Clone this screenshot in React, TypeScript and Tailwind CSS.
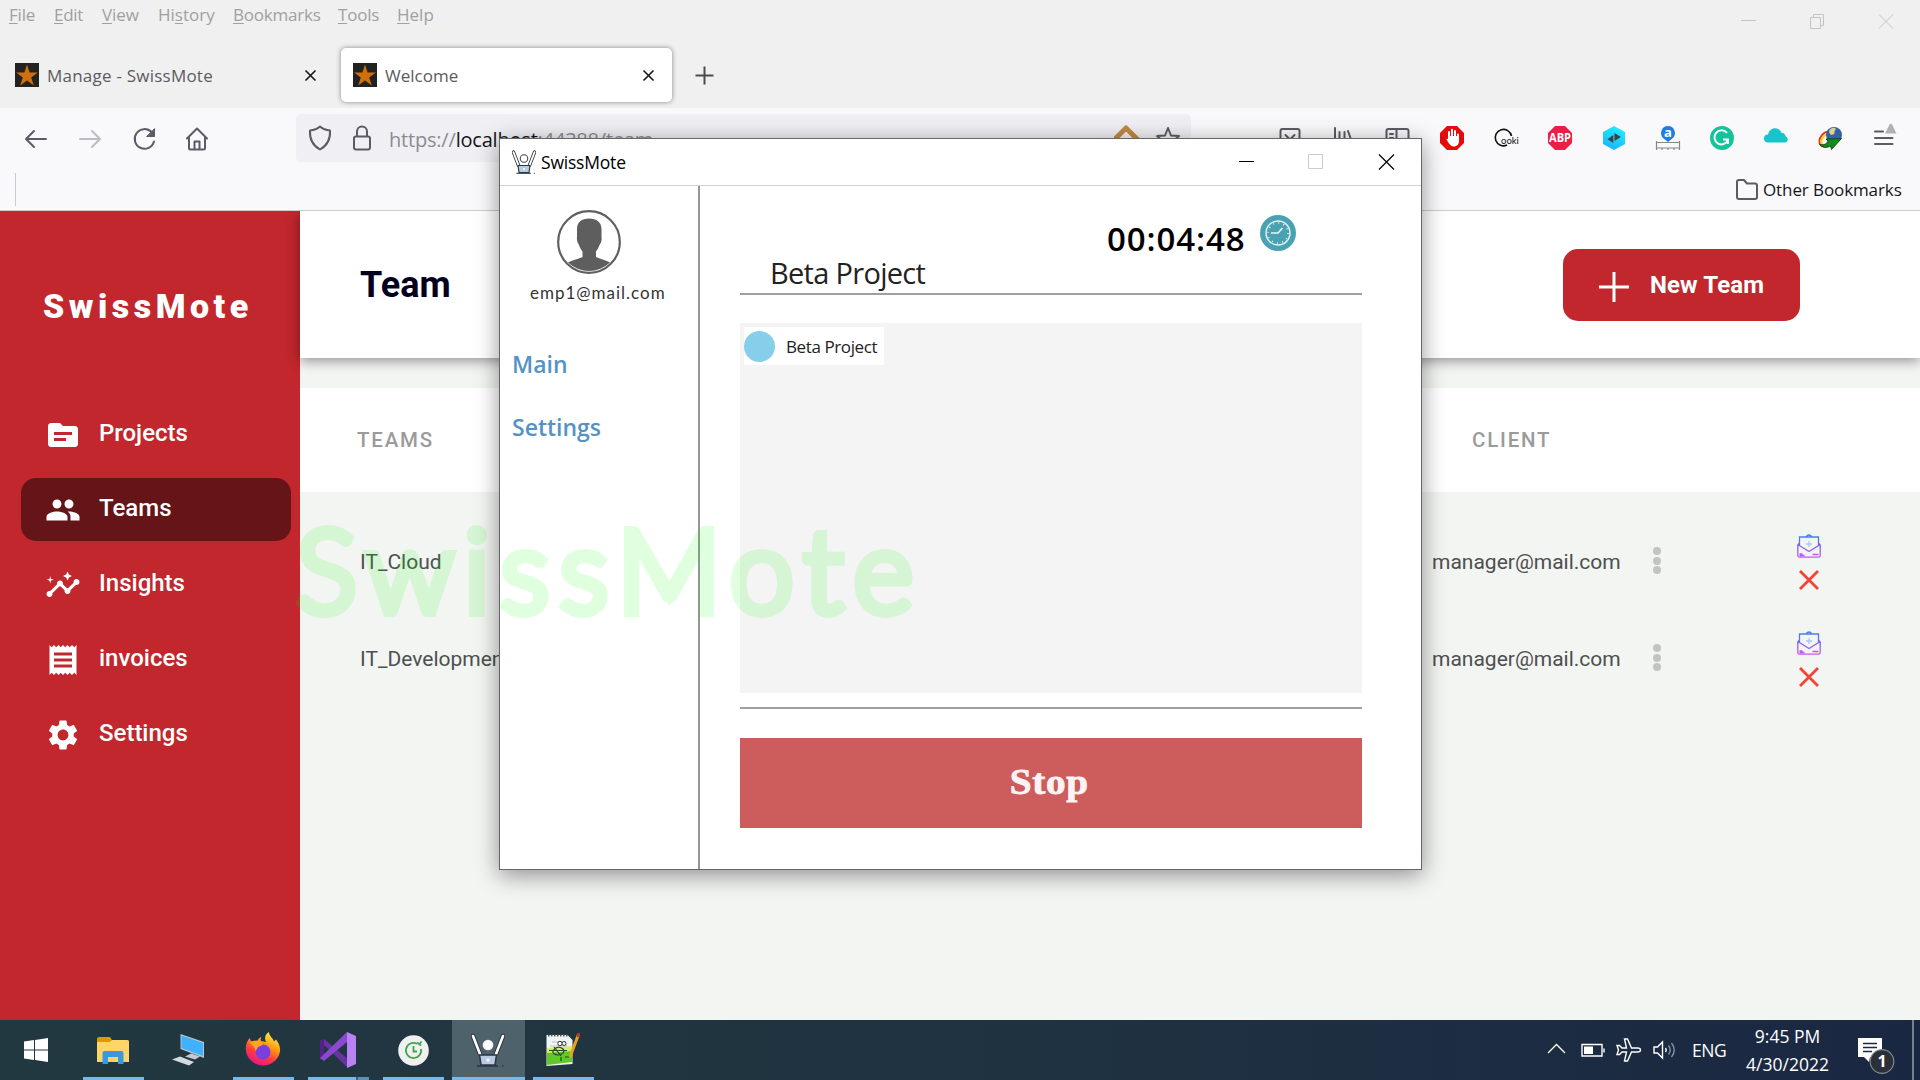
import React from "react";
import { MdSource, MdPeople, MdInsights, MdReceipt, MdSettings } from "react-icons/md";

const UI = "font-['Open_Sans',sans-serif]";

function StarFavicon() {
  return (
    <svg width="24" height="24" viewBox="0 0 24 24" className="shrink-0">
      <rect width="24" height="24" fill="#222" />
      <path d="M12 1.5l2.6 8h8.2l-6.6 4.9 2.6 8L12 17.5l-6.8 4.9 2.6-8L1.2 9.500h8.2z" fill="#d0700c" />
    </svg>
  );
}

function TabClose() {
  return (
    <svg width="13" height="13" viewBox="0 0 13 13" stroke="#15141a" strokeWidth="1.6">
      <path d="M1.500 1.500l10 10M11.500 1.500l-10 10" />
    </svg>
  );
}

function Menu({ k, rest, pre = "", className }: { k: string; rest: string; pre?: string; className: string }) {
  return (
    <span className={"shrink-0 whitespace-nowrap " + className}>
      {pre}
      <span className="underline decoration-1 underline-offset-2">{k}</span>
      {rest}
    </span>
  );
}

function TopStrip() {
  return (
    <div className="flex h-[108px] bg-[#f0f0f0]">
      <div className="flex flex-1 flex-col">
        <div className="flex h-[29px] pl-[9px] text-[17px] leading-[29px] text-[#a0a0a0]">
          <Menu k="F" rest="ile" className="w-[45px] tracking-[-0.2px]" />
          <Menu k="E" rest="dit" className="w-[48px] tracking-[-0.3px]" />
          <Menu k="V" rest="iew" className="w-[56px] tracking-[-0.1px]" />
          <Menu pre="Hi" k="s" rest="tory" className="w-[75px]" />
          <Menu k="B" rest="ookmarks" className="w-[105px] tracking-[-0.2px]" />
          <Menu k="T" rest="ools" className="w-[59px] tracking-[-0.2px]" />
          <Menu k="H" rest="elp" className="w-[50px]" />
        </div>
        <div className="flex h-[79px] items-start pt-[19px] text-[17px] text-[#5b5b60]">
          <div className="flex h-[54px] w-[341px] items-center pl-[15px]">
            <StarFavicon />
            <span className="ml-2 w-[257px] whitespace-nowrap pt-px tracking-[0.23px]">Manage - SwissMote</span>
            <TabClose />
          </div>
          <div className="flex h-[54px] w-[331px] items-center rounded-[5px] bg-white pl-3 shadow-[0_0_5px_rgba(0,0,0,0.45)]">
            <StarFavicon />
            <span className="ml-2 w-[257px] pt-px">Welcome</span>
            <TabClose />
          </div>
          <svg className="ml-[23px] mt-[18px]" width="19" height="19" viewBox="0 0 19 19" stroke="#4a4a50" strokeWidth="2">
            <path d="M9.500 0.500v18M0.500 9.500h18" />
          </svg>
        </div>
      </div>
      <div className="flex items-start pr-[26px] pt-[14px]">
        <svg width="153" height="15" viewBox="0 0 153 15" fill="none" stroke="#c4c4c4" strokeWidth="1">
          <path d="M0 6.500h15M69.500 3.500h10v11h-10zM72.500 3.500v-3h10v11h-3M138 0.500l14 14M152 0.500l-14 14" />
        </svg>
      </div>
    </div>
  );
}

function Extensions() {
  return (
    <div className="flex w-[486px] items-center">
      <div className="flex w-[54px] justify-center">
        <svg width="24" height="24" viewBox="0 0 24 24">
          <path d="M7 0h10l7 7v10l-7 7H7l-7-7V7z" fill="#e30b0b" />
          <path d="M9 13V6M12 12V3.800M15 12V5M18 14V8.500" stroke="#fff" strokeWidth="2" strokeLinecap="round" />
          <path d="M8 10h11v5c0 3-2 5.500-5 5.500-2.500 0-4-1.500-5-3l-2.500-4c0-1 1-1 1.500-.5z" fill="#fff" />
        </svg>
      </div>
      <div className="flex w-[54px] justify-center">
        <svg width="24" height="24" viewBox="0 0 24 24" fill="none" className="overflow-visible">
          <path d="M13 19A8.200 8.200 0 1 1 17.500 10" stroke="#111" strokeWidth="1.600" />
          <text x="7" y="18" fontSize="9.500" fontFamily="Lato" fill="#111">ooki</text>
        </svg>
      </div>
      <div className="flex w-[54px] justify-center">
        <svg width="24" height="24" viewBox="0 0 24 24">
          <path d="M7 0h10l7 7v10l-7 7H7l-7-7V7z" fill="#ed1e45" />
          <text x="12" y="16.300" fontSize="11.500" fontWeight="700" fontFamily="Open Sans" textAnchor="middle" textLength="22" lengthAdjust="spacingAndGlyphs" fill="#fff">ABP</text>
        </svg>
      </div>
      <div className="flex w-[54px] justify-center">
        <svg width="24" height="24" viewBox="0 0 24 24">
          <defs>
            <linearGradient id="hex" x1="0.700" y1="0" x2="0.300" y2="1">
              <stop offset="0" stopColor="#1ff0ff" />
              <stop offset="1" stopColor="#17b4ff" />
            </linearGradient>
          </defs>
          <path d="M12 0l11 6v12l-11 6-11-6V6z" fill="url(#hex)" />
          <path d="M11.300 9v8L5.500 13.300zM12.500 7v8l6.300-4z" fill="#3c4144" />
        </svg>
      </div>
      <div className="flex w-[54px] justify-center">
        <svg width="24" height="24" viewBox="0 0 24 24" className="overflow-visible">
          <path d="M12 0a7 7 0 0 1 4 12.700L12 16l-4-3.300A7 7 0 0 1 12 0z" fill="#1c7fe8" />
          <text x="12" y="11" fontSize="13" fontWeight="700" fontFamily="Noto Sans" textAnchor="middle" fill="#fff">a</text>
          <path d="M.5 15v9M23.500 15v9M.5 16.500h23M.5 22h23M6 22v2M12 22v2M18 22v2" stroke="#888" strokeWidth="1.200" fill="none" />
        </svg>
      </div>
      <div className="flex w-[54px] justify-center">
        <svg width="24" height="24" viewBox="0 0 24 24" fill="none" stroke="#fff" strokeWidth="2">
          <circle cx="12" cy="12" r="12" fill="#15c39a" stroke="none" />
          <path d="M17 7A7 7 0 1 0 18 14M13 13.500h5v4.500" />
        </svg>
      </div>
      <div className="flex w-[54px] justify-center">
        <svg width="24" height="24" viewBox="0 0 24 24">
          <path d="M4 16.500a4 4 0 0 1 0-8C5 4.500 7.500 2.200 11 2.200c3.200 0 5.500 2 6.300 4.600 2.500 0 4.200 1.600 4.300 3.700 3.200 1 2.700 6-.6 6z" fill="#17c4cb" />
        </svg>
      </div>
      <div className="flex w-[54px] justify-center">
        <svg width="24" height="24" viewBox="0 0 24 24" fill="none">
          <ellipse cx="8.500" cy="13" rx="8.500" ry="6" stroke="#e33320" strokeWidth="1.800" transform="rotate(-50 8.500 13)" />
          <ellipse cx="9" cy="13.500" rx="7" ry="4.500" stroke="#f5d51c" strokeWidth="2" transform="rotate(-50 9 13.500)" />
          <circle cx="16" cy="9" r="8" fill="#3560a8" />
          <path d="M11.500 4c2-2.500 5-3 6-1.500s-2 2.500-1 4-3 3-4 2-2-3-1-4.500z" fill="#d8d38d" />
          <path d="M1.500 18c3 2 7.500 0 8.500-3l-2-2 15.500-.5L13.500 23.500l-1-3.500C8.500 22.500 4 21.500 1.500 18z" fill="#128a1c" stroke="#0a3c0d" strokeWidth="0.800" />
        </svg>
      </div>
      <div className="flex w-[54px] justify-center">
        <svg width="26" height="30" viewBox="0 0 26 30" className="mb-[2px]">
          <path d="M4 9.500h8M4 16h17.500M4 22h17.500" stroke="#5b5b66" strokeWidth="2" strokeLinecap="round" />
          <path d="M14 11.500L18.500 2.500q1.300-1.600 2.600 0L25.500 11.500z" fill="#b1b1b3" />
        </svg>
      </div>
    </div>
  );
}

function NavBar() {
  return (
    <div className="flex h-[60px] items-center bg-[#f9f9fb]">
      <svg className="ml-6 shrink-0" width="190" height="28" viewBox="0 0 190 28" fill="none" stroke="#5b5b66" strokeWidth="2" strokeLinecap="round" strokeLinejoin="round">
        <path d="M22 15H2M10 7l-8 8 8 8" />
        <path d="M56 15h20M68 7l8 8-8 8" stroke="#bcbcc2" />
        <path d="M130 17.500a9.800 9.800 0 1 1-2.500-9.500" />
        <path d="M130.500 5v7.500h-7.500z" fill="#5b5b66" strokeWidth="1" />
        <path d="M163 14.500L173 4.500l10 10M165 13v11q0 1.500 1.500 1.500h13q1.500 0 1.500-1.500V13M170.500 25v-7.500h5V25" />
      </svg>
      <div className="ml-[82px] flex h-12 w-[895px] shrink-0 items-center rounded-[5px] bg-[#f0f0f4]">
        <svg className="ml-3 shrink-0" width="64" height="26" viewBox="0 0 64 26" fill="none" stroke="#5b5b66" strokeWidth="2" strokeLinejoin="round">
          <path d="M12 1.500q4 3.500 10 4 .8 13-10 19Q1.200 18.500 2 5.500q6-.5 10-4z" />
          <rect x="46" y="11.500" width="16" height="13" rx="2" />
          <path d="M49 11.500V6.500a5 5 0 0 1 10 0v5" />
        </svg>
        <span className="ml-[17px] mt-[3px] w-[725px] whitespace-nowrap text-[20px] leading-6 tracking-[-0.2px] text-[#8b8b93]">
          https://<span className="text-[#15141a]">localhost</span>:44388/team
        </span>
        <svg className="shrink-0" width="70" height="26" viewBox="0 0 70 26" fill="none" strokeLinejoin="round">
          <path d="M0 15L12 3l12 12" stroke="#c08a42" strokeWidth="5" />
          <path d="M54 3l3 7.500 8 .6-6 5.200 2 8L54 20l-7 4.300 2-8-6-5.200 8-.6z" stroke="#5b5b66" strokeWidth="2" />
        </svg>
      </div>
      <svg className="ml-[87px] shrink-0" width="134" height="26" viewBox="0 0 134 26" fill="none" stroke="#5b5b66" strokeWidth="2" strokeLinecap="round">
        <path d="M2.500 6q0-2 2-2h15q2 0 2 2v7a9.500 9 0 0 1-19 0zM7.500 10l4.500 4.500 4.500-4.500" />
        <path d="M57 3v18M61.500 7v14M66.500 7v14M70 6l5 14" />
        <path d="M108.500 6q0-2 2-2h18q2 0 2 2v14h-22zM118.500 4v16M112 9h3M112 13h3" />
      </svg>
      <div className="ml-[13px]">
        <Extensions />
      </div>
    </div>
  );
}

function BookmarksBar() {
  return (
    <div className="flex h-[43px] items-center justify-between border-b border-[#cccccc] bg-[#f9f9fb]">
      <div className="ml-[15px] h-[33px] w-px bg-[#ccccd0]" />
      <div className="flex items-center">
        <svg width="22" height="21" viewBox="0 0 22 21" fill="none" stroke="#5b5b66" strokeWidth="2" strokeLinejoin="round">
          <path d="M1 18V3q0-2 2-2h5l3 3.500h8q2 0 2 2V18q0 2-2 2H3q-2 0-2-2z" />
        </svg>
        <span className="ml-[5px] w-[157px] whitespace-nowrap pt-px text-[17px] tracking-[-0.1px] text-[#15141a]">Other Bookmarks</span>
      </div>
    </div>
  );
}

const NAV = [
  { label: "Projects", Icon: MdSource, active: false },
  { label: "Teams", Icon: MdPeople, active: true },
  { label: "Insights", Icon: MdInsights, active: false },
  { label: "invoices", Icon: MdReceipt, active: false },
  { label: "Settings", Icon: MdSettings, active: false },
];

function Sidebar() {
  return (
    <aside className="w-[300px] shrink-0 bg-[#c1272d] text-white">
      <div className="flex h-[192px] items-center pb-[2px] pl-[43px] text-[34px] font-black leading-none tracking-[4.5px]">SwissMote</div>
      <nav className="flex flex-col gap-3 pl-[21px] pr-[9px]">
        {NAV.map(({ label, Icon, active }) => (
          <div key={label} className={"flex h-[63px] items-center rounded-[15px] pl-6 " + (active ? "bg-[#651418]" : "")}>
            <Icon size={36} />
            <span className="mb-[3px] ml-[18px] text-[24px] font-medium leading-none">{label}</span>
          </div>
        ))}
      </nav>
    </aside>
  );
}

function Envelope() {
  return (
    <svg width="24" height="24" viewBox="0 0 24 24" fill="none">
      <defs>
        <linearGradient id="env" x1="0" y1="0" x2="0" y2="24" gradientUnits="userSpaceOnUse">
          <stop offset="0" stopColor="#3f83f0" />
          <stop offset="0.500" stopColor="#7a62f4" />
          <stop offset="1" stopColor="#cf55f7" />
        </linearGradient>
      </defs>
      <path d="M2.500 11V3h19v8M9 3q3-4 6 0M2.500 9L.8 11v10.500q0 1.700 1.700 1.700h19q1.700 0 1.700-1.700V11L21.500 9M1.500 11L12 17.500 22.500 11M2.500 20h3M2.500 21.500h5M15.500 20.500h6" stroke="url(#env)" strokeWidth="1.300" />
      <path d="M12 7v6M9 10h6" stroke="#aac6f7" strokeWidth="1.300" />
    </svg>
  );
}

function Row({ team }: { team: string }) {
  return (
    <div className="flex h-[97px] items-center text-[#4d4f50]">
      <span className="ml-[60px] w-[1072px] pt-[3px] text-[21px] leading-none">{team}</span>
      <span className="w-[221px] pt-[3px] text-[21px] leading-none">manager@mail.com</span>
      <span className="flex w-2 flex-col gap-[1.400px]">
        <i className="size-2 rounded-full bg-[#c3c3c3]" />
        <i className="size-2 rounded-full bg-[#c3c3c3]" />
        <i className="size-2 rounded-full bg-[#c3c3c3]" />
      </span>
      <span className="ml-[136px] flex flex-col items-center gap-3 pt-[2px]">
        <Envelope />
        <svg width="20" height="20" viewBox="0 0 20 20" stroke="#f44336" strokeWidth="2.800">
          <path d="M1 1l18 18M19 1L1 19" />
        </svg>
      </span>
    </div>
  );
}

function Page() {
  return (
    <div className="flex h-[809px] overflow-hidden font-[Roboto,sans-serif]">
      <Sidebar />
      <main className="flex-1 bg-[#f3f5f2]">
        <header className="relative flex h-[147px] items-center bg-white shadow-[0_3px_12px_rgba(0,0,0,0.4)]">
          <h1 className="ml-[60px] w-[1203px] text-[36px] font-bold leading-none text-[#02001c]">Team</h1>
          <button className="flex h-[72px] w-[237px] items-center rounded-[15px] bg-[#c1272d] text-white">
            <svg className="ml-9 mt-1" width="30" height="30" viewBox="0 0 30 30" stroke="#fff" strokeWidth="3">
              <path d="M15 0v30M0 15h30" />
            </svg>
            <span className="ml-[21px] text-[24px] font-bold leading-none tracking-[0.1px]">New Team</span>
          </button>
        </header>
        <div className="mt-[30px] flex h-[104px] items-center bg-white text-[20.500px] font-medium leading-none tracking-[1.800px] text-[#9b9b9b]">
          <span className="ml-[57px] w-[1115px]">TEAMS</span>
          <span>CLIENT</span>
        </div>
        <div className="pt-[20px]">
          <Row team="IT_Cloud" />
          <Row team="IT_Development" />
        </div>
      </main>
    </div>
  );
}

function PersonIcon({ size, solid = false }: { size: number; solid?: boolean }) {
  return (
    <svg width={size} height={size} viewBox="0 0 34 34" fill="none" className="shrink-0">
      <path d="M2 3l7 18M32 3l-7 18" stroke="#2e3640" strokeWidth={solid ? 4.6 : 5} strokeLinecap="round" />
      <path d="M2 3l7 18M32 3l-7 18" stroke="#fff" strokeWidth="2.600" strokeLinecap="round" />
      <circle cx="17" cy="12" r={solid ? 4.6 : 5.3} fill="#fff" stroke={solid ? "#f4f4f4" : "#3e4650"} strokeWidth="1.500" />
      <path d="M8.500 22h17l-1.500 10H10z" fill="#b9cbe4" stroke="#2e3640" strokeWidth="1.600" />
      <circle cx="17" cy="27" r="1.500" fill="#fff" />
      <path d="M6 33h21M31 33h1.500" stroke="#2e3640" strokeWidth="1.400" />
    </svg>
  );
}

function Dialog() {
  return (
    <div className={"absolute left-[499px] top-[138px] flex h-[732px] w-[923px] flex-col border border-[#666] bg-white shadow-[0_5px_22px_rgba(0,0,0,0.42)] " + UI}>
      <div className="flex h-[47px] shrink-0 items-center border-b border-[#d0d0d0] pl-3">
        <PersonIcon size={24} />
        <span className="ml-[5px] w-[698px] pt-px text-[17.500px] leading-none tracking-[-0.2px] text-black">SwissMote</span>
        <svg width="160" height="16" viewBox="0 0 160 16" fill="none">
          <path d="M0 7.500h15" stroke="#000" />
          <path d="M69.500 0.500h14v14h-14z" stroke="#ccc" />
          <path d="M140 0.500l15 15M155 0.500l-15 15" stroke="#000" strokeWidth="1.200" />
        </svg>
      </div>
      <div className="flex flex-1">
        <div className="w-[200px] shrink-0 border-r-2 border-[#959595] pt-6">
          <svg className="ml-[57px]" width="64" height="64" viewBox="0 0 64 64">
            <circle cx="32" cy="32" r="30.800" fill="#fff" stroke="#606060" strokeWidth="2.200" />
            <path d="M32 8.500c7.500 0 12.500 4 12.500 10.500v8c.6 3-.5 6-2 8-1.200 3.500-2.500 5-3.500 6.500v5.500c5 2.500 10 3 14 5.500A30.500 30.500 0 0 1 11 52.500c4-2.500 9.500-3 14.500-5.500v-5.500c-1-1.500-2.500-3-3.500-6.500-1.500-2-2.500-5-2-8v-8c0-6.500 4.500-10.500 12-10.500z" fill="#5e5e5e" />
          </svg>
          <div className="ml-[30px] mt-[7px] font-[Lato,sans-serif] text-[17px] leading-6 tracking-[1px] text-[#333]">emp1@mail.com</div>
          <div className="ml-[12px] mt-[43px] text-[23px] font-semibold leading-8 text-[#5592c6]">Main</div>
          <div className="ml-[12px] mt-[31px] text-[23px] font-semibold leading-8 text-[#5592c6]">Settings</div>
        </div>
        <div className="ml-10 w-[622px]">
          <div className="flex h-[107px] items-start">
            <span className="ml-[30px] mt-[67px] w-[337px] text-[29px] leading-10 tracking-[-0.700px] text-[#222]">Beta Project</span>
            <span className="mt-[33px] w-[153px] whitespace-nowrap text-[33px] font-semibold leading-10 tracking-[0.900px] text-black">00:04:48</span>
            <svg className="mt-[29px]" width="36" height="36" viewBox="0 0 36 36" fill="none" stroke="#e8f6f7">
              <circle cx="18" cy="18" r="18" fill="#48a2b1" stroke="none" />
              <circle cx="18" cy="18" r="12" strokeWidth="1.400" />
              <path d="M11 18h7l4.500-5" strokeWidth="1.600" />
              <circle cx="18" cy="18" r="10" strokeWidth="1.500" strokeDasharray="1 4.236" />
            </svg>
          </div>
          <div className="h-[2px] bg-[#a0a0a0]" />
          <div className="mt-7 h-[370px] bg-[#f4f4f4] pl-1 pt-1">
            <div className="flex h-[38px] w-[140px] items-center bg-white">
              <i className="size-[31px] rounded-full bg-[#87ceeb]" />
              <span className="ml-[11px] whitespace-nowrap text-[17px] leading-none tracking-[-0.400px] text-[#222]">Beta Project</span>
            </div>
          </div>
          <div className="mt-[14px] h-[2px] bg-[#a0a0a0]" />
          <button className="mt-[29px] flex h-[90px] w-full items-center justify-center bg-[#cd5c5c] pr-[3px] font-['Liberation_Serif',serif] text-[35px] font-bold tracking-[0.6px] text-[#fdf3f3] [-webkit-text-stroke:0.800px_#fdf3f3]">
            <span className="scale-x-112">Stop</span>
          </button>
        </div>
      </div>
    </div>
  );
}

function TaskSlot({ className, children }: { className: string; children: React.ReactNode }) {
  return <div className={"flex h-full shrink-0 items-center justify-center " + className}>{children}</div>;
}

function Taskbar() {
  const run = "border-b-[3px] border-[#76b9ed] pt-[3px] ";
  return (
    <footer className={"relative flex h-[60px] items-center bg-linear-to-r from-[#223840] via-[#1f3340] to-[#1a2742] text-white " + UI}>
      <TaskSlot className="w-[72px]">
        <svg width="24" height="24" viewBox="0 0 24 24" fill="#fff">
          <path d="M0 3.500l10-1.400v9.400H0zM11 2l13-2v11.500H11zM0 12.500h10V22L0 20.500zM11 12.500h13V24l-13-2z" />
        </svg>
      </TaskSlot>
      <TaskSlot className={"ml-[11px] w-[61px] pr-[2px] " + run}>
        <svg width="32" height="27" viewBox="0 0 32 27">
          <path d="M0 2q0-2 2-2h11l2 3h15q2 0 2 2v20H0z" fill="#dd9a00" />
          <path d="M0 5h13l2-2h15q2 0 2 2v20H0z" fill="#ffd469" />
          <path d="M5.500 16q0-2 2-2h17q2 0 2 2v11H21v-7H11v7H5.500z" fill="#3b98dd" />
        </svg>
      </TaskSlot>
      <TaskSlot className="ml-[10px] w-[67px]">
        <svg width="32" height="32" viewBox="0 0 32 32">
          <path d="M8.500 0L32 8v16L8.500 15z" fill="#b9c3c9" />
          <path d="M9.500 1.500L31 9v13L9.500 14z" fill="#3fb2ff" />
          <path d="M0 25.500l8-3L22 28l-5 3.500z" fill="#d5dade" />
          <path d="M13 22.500l6-3 9 3-5 3z" fill="#c3cbd0" />
        </svg>
      </TaskSlot>
      <TaskSlot className={"ml-[12px] w-[61px] pr-[2px] " + run}>
        <svg width="36" height="36" viewBox="0 0 36 36">
          <defs>
            <linearGradient id="ff" x1="0.800" y1="0" x2="0.300" y2="1">
              <stop offset="0" stopColor="#fff44f" />
              <stop offset="0.400" stopColor="#ff980e" />
              <stop offset="0.700" stopColor="#ff3647" />
              <stop offset="1" stopColor="#e31587" />
            </linearGradient>
          </defs>
          <path d="M5 6c0 2 1 3 2 4 1.500-1 3.500-1.500 5.500-1.500 1-2 2.500-3 4-3.500-1 1.500-1 3-.5 4l5 1C19 6 20 2.500 24 0c0 4 4 6 5 9.500l2-2c3 4 4.500 7.500 4 12A17.300 17.300 0 0 1 .8 18C.5 13 2.500 8 5 6z" fill="url(#ff)" />
          <circle cx="18" cy="20" r="7.500" fill="#7a3fe0" />
          <path d="M5 10c4-2 9-2 13 2-1 2-4 2-5 3s-1 3-3 4c1-4-3-5-5-9z" fill="#ffa51f" />
        </svg>
      </TaskSlot>
      <div className="relative ml-[14px] h-full w-[61px] shrink-0">
        <TaskSlot className={"pr-[2px] " + run}>
          <svg width="36" height="36" viewBox="0 0 36 36">
            <path d="M0 9l4-2 24 20v9L4 13v12l-4 2z" fill="#68329f" />
            <path d="M0 9l4-2v20l-4-2z" fill="#52218a" />
            <path d="M4 29l-4-3L27 0v10z" fill="#8a49cf" />
            <path d="M27 0l9 4v28l-9 4z" fill="#b982f4" />
          </svg>
        </TaskSlot>
        <div className="absolute bottom-0 right-0 h-[3px] w-[13px] border-l-2 border-[#3f6379] bg-[#5e8fb4]" />
      </div>
      <TaskSlot className={"ml-[14px] w-[61px] pr-px " + run}>
        <svg width="31" height="31" viewBox="0 0 31 31" fill="none">
          <circle cx="15.500" cy="15.500" r="15.300" fill="#f0f0f1" />
          <path d="M19 8.700A7.600 7.600 0 1 0 23 14" stroke="#3fa64a" strokeWidth="1.800" />
          <path d="M15.500 11v5.500h3.500M19 7.500l4 3M22 8.500l1.500-2" stroke="#3fa64a" strokeWidth="1.800" />
        </svg>
      </TaskSlot>
      <TaskSlot className={"ml-2 w-[73px] bg-[#4d626b] pr-[2px] " + run}>
        <PersonIcon size={34} solid />
      </TaskSlot>
      <TaskSlot className={"ml-2 w-[61px] pr-[2px] " + run}>
        <svg width="34" height="34" viewBox="0 0 34 34">
          <path d="M.5 2h21l5 5v24l-26 2z" fill="#f1f4f4" />
          <path d="M1 16l25-2v15l-25 3z" fill="#5fc926" />
          <path d="M1 15l25-2v5L1 20z" fill="#d5ee62" />
          <path d="M2 2.500h20" stroke="#555" strokeWidth="2" strokeDasharray="1.500 1.500" />
          <path d="M6 9h14M4 13h17" stroke="#b6c5cc" />
          <path d="M7 18c2-4 7-5 10-2s-2 6-5 6-6-2-5-4zM3 17.500h18M8 14l7 9M19 24h4" stroke="#24482c" strokeWidth="1.200" fill="none" />
          <path d="M15 24v4" stroke="#24482c" strokeWidth="1.200" />
          <circle cx="14" cy="10.500" r="2.200" fill="#fff" stroke="#333" />
          <circle cx="18" cy="10.500" r="2" fill="#fff" stroke="#333" />
          <path d="M32.500 1.500L24 24" stroke="#e5a31d" strokeWidth="3" />
          <path d="M33 0l-1 4" stroke="#b43b34" strokeWidth="3" />
        </svg>
      </TaskSlot>
      <div className="ml-auto flex h-full items-center">
        <svg width="130" height="26" viewBox="0 0 130 26" fill="none" stroke="#fff" strokeWidth="1.400">
          <path d="M1 16l8.500-8.500L18 16" />
          <path d="M35 7.500h20v11.500H35zM57 11.500v4" />
          <path d="M37 9.500h9v7.500h-9z" fill="#fff" stroke="none" />
          <path d="M93.500 13q0-2-3-2h-6L80.500 2h-3l2 9h-4.500l-2.500-2.500H70L71.500 13 70 17.500h2.500L75 15h4.500l-2 9h3l4-9h6q3 0 3-2z" />
          <path d="M107 10h3.500l5-5v16l-5-5H107z" />
          <path d="M118.500 11q1.500 2 0 4" />
          <path d="M121.500 8.500q3.500 4.500 0 9M124.500 6q5.500 7 0 14" stroke="#8591a3" />
        </svg>
        <span className="ml-[15px] w-[40px] pt-px text-[17.500px] leading-none tracking-[-0.5px]">ENG</span>
        <div className="ml-[7px] flex w-[97px] flex-col items-center text-[17.500px] leading-7">
          <span>9:45 PM</span>
          <span>4/30/2022</span>
        </div>
        <svg className="ml-[22px] mt-[9px]" width="38" height="38" viewBox="0 0 38 38">
          <path d="M0 2h24v19H12l-1 5-5-5H0z" fill="#fff" />
          <path d="M5 7.500h14M5 11.500h14M5 15.500h9" stroke="#1b2a42" strokeWidth="1.300" />
          <circle cx="24" cy="25.500" r="11.800" fill="#2b2f38" stroke="#858a92" strokeWidth="1.200" />
          <text x="24" y="31" fontSize="16" fontWeight="700" fontFamily="Open Sans" fill="#fff" textAnchor="middle">1</text>
        </svg>
        <div className="ml-[16px] mr-[6px] h-full w-[2px] bg-[#76808f]" />
      </div>
    </footer>
  );
}

export default function App() {
  return (
    <div className="relative h-[1080px] w-[1920px] overflow-hidden bg-white">
      <div className={UI}>
        <TopStrip />
        <NavBar />
        <BookmarksBar />
      </div>
      <Page />
      <Taskbar />
      <Dialog />
      <div className="pointer-events-none absolute left-[296px] top-[496px] whitespace-nowrap font-[Lato,sans-serif] text-[114px] font-light leading-[144px] tracking-[11px] text-[#00ff00] opacity-[0.12] [-webkit-text-stroke:10px_#00ff00] [stroke-linejoin:round]">
        SwissMote
      </div>
    </div>
  );
}
